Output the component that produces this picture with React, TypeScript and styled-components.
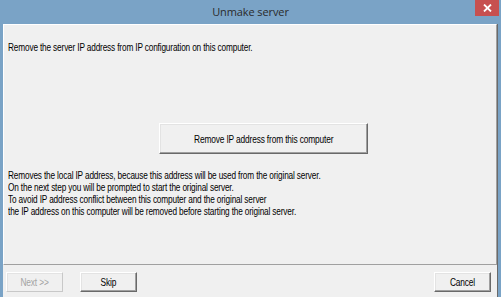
import React from "react";
import styled, { createGlobalStyle } from "styled-components";

const GlobalStyle = createGlobalStyle`
  html, body {
    margin: 0;
    padding: 0;
    background: #7aa3c6;
    overflow: hidden;
  }
`;

const Frame = styled.div`
  width: 501px;
  height: 297px;
  display: flex;
  flex-direction: column;
  background: #7aa3c6;
  font-family: "Liberation Sans", Arial, sans-serif;
`;

const TitleBar = styled.div`
  height: 24px;
  display: flex;
  align-items: flex-start;
  justify-content: center;
  position: relative;
`;

const Title = styled.div`
  font-family: "Open Sans", "Noto Sans", sans-serif;
  font-size: 11px;
  letter-spacing: -0.1px;
  color: #2b2b2b;
  line-height: 24px;
`;

const CloseButton = styled.div`
  position: absolute;
  top: 0;
  left: 475px;
  width: 24px;
  height: 16px;
  background: #c75050;
  display: flex;
  align-items: center;
  justify-content: center;
`;

const Client = styled.div`
  flex: 1;
  margin-left: 3px;
  margin-right: 3px;
  display: flex;
  flex-direction: column;
  background: #f0f0f0;
  border-right: 1px solid #6a6a6a;
`;

const Panel = styled.div`
  height: 241px;
  box-sizing: border-box;
  border-top: 1px solid #ffffff;
  border-left: 1px solid #ffffff;
  border-bottom: 1px solid #a0a0a0;
  border-right: 1px solid #a0a0a0;
  display: flex;
  flex-direction: column;
  align-items: flex-start;
  padding: 16px 0 0 4px;
`;

/* the dialog font is a narrow bitmap face: squeeze Liberation Sans to its width */
const Text = styled.div`
  font-size: 11px;
  line-height: 12px;
  color: #000;
  letter-spacing: -0.2px;
  white-space: nowrap;
  transform: scaleX(0.75);
  transform-origin: left top;
`;

const CenterRow = styled.div`
  display: flex;
  margin-top: 70px;
  margin-left: 151px;
`;

const Paragraph = styled(Text)`
  margin-top: 15px;
`;

const Button = styled.div<{ $width: number; $height: number; $disabled?: boolean }>`
  width: ${(p) => p.$width}px;
  height: ${(p) => p.$height}px;
  box-sizing: border-box;
  display: flex;
  align-items: center;
  justify-content: center;
  font-size: 11px;
  letter-spacing: -0.2px;
  white-space: nowrap;
  color: ${(p) => (p.$disabled ? "#a3a3a3" : "#000")};
  background: #f0f0f0;
  border: 1px solid;
  border-color: ${(p) =>
    p.$disabled
      ? "#ffffff #c8c8c8 #c8c8c8 #ffffff"
      : "#ffffff #696969 #696969 #ffffff"};
  box-shadow: ${(p) =>
    p.$disabled
      ? "inset 1px 1px #e3e3e3"
      : "inset -1px -1px #a0a0a0, inset 1px 1px #e3e3e3"};
`;

const Label = styled.span`
  display: inline-block;
  transform: scaleX(0.76);
  transform-origin: center;
`;

const Footer = styled.div`
  display: flex;
  align-items: center;
  padding: 7px 0 0 3px;
`;

const Gap = styled.div<{ $width?: number }>`
  flex: ${(p) => (p.$width ? `0 0 ${p.$width}px` : "1")};
`;

export default function App() {
  return (
    <Frame>
      <GlobalStyle />
      <TitleBar>
        <Title>Unmake server</Title>
        <CloseButton>
          <svg width="9" height="8" viewBox="0 0 9 8">
            <path d="M1 0.5 L8 7.5 M8 0.5 L1 7.5" stroke="#ffffff" strokeWidth="1.8" />
          </svg>
        </CloseButton>
      </TitleBar>
      <Client>
        <Panel>
          <Text>Remove the server IP address from IP configuration on this computer.</Text>
          <CenterRow>
            <Button $width={209} $height={31}>
              <Label>Remove IP address from this computer</Label>
            </Button>
          </CenterRow>
          <Paragraph>
            Removes the local IP address, because this address will be used from the original server.
            <br />
            On the next step you will be prompted to start the original server.
            <br />
            To avoid IP address conflict between this computer and the original server
            <br />
            the IP address on this computer will be removed before starting the original server.
          </Paragraph>
        </Panel>
        <Footer>
          <Button $width={57} $height={20} $disabled>
            <Label>Next &gt;&gt;</Label>
          </Button>
          <Gap $width={17} />
          <Button $width={57} $height={20}>
            <Label>Skip</Label>
          </Button>
          <Gap />
          <Button $width={57} $height={20}>
            <Label>Cancel</Label>
          </Button>
          <Gap $width={6} />
        </Footer>
      </Client>
    </Frame>
  );
}
